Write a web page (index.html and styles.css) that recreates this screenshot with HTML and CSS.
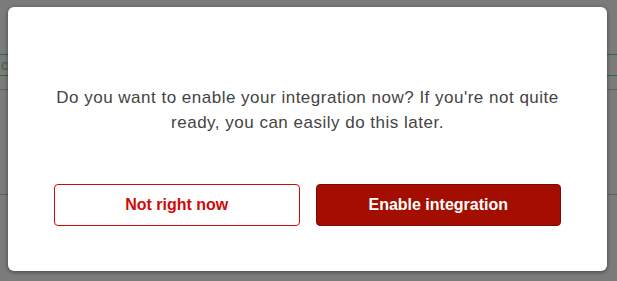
FILE: index.html
```html
<!DOCTYPE html>
<html>
<head>
<meta charset="utf-8">
<link rel="stylesheet" href="styles.css">
</head>
<body>
<div class="page">
  <div class="bg-row bg-green"><span class="bg-text">c</span></div>
  <div class="bg-line bg-line-1"></div>
  <div class="bg-line bg-line-2"></div>
</div>
<div class="modal">
  <p class="message">Do you want to enable your integration now? If you're not quite ready, you can easily do this later.</p>
  <div class="actions">
    <button class="btn btn-secondary">Not right now</button>
    <button class="btn btn-primary">Enable integration</button>
  </div>
</div>
</body>
</html>
```
FILE: styles.css
```css
html, body {
  margin: 0;
  padding: 0;
}
body {
  width: 617px;
  height: 281px;
  background: #7b7b7b;
  font-family: "Liberation Sans", Arial, sans-serif;
  position: relative;
  overflow: hidden;
}
.page {
  display: flex;
  flex-direction: column;
  padding-top: 54px;
}
.bg-row {
  height: 20px;
  border-top: 1px solid #2f6b3f;
  border-bottom: 1px solid #2f6b3f;
  display: flex;
  align-items: center;
}
.bg-text {
  color: #2f6b3f;
  font-size: 14px;
  padding-left: 1px;
}
.bg-line {
  height: 1px;
  background: #5f5f5f;
}
.bg-line-1 { margin-top: 13px; }
.bg-line-2 { margin-top: 104px; }
.modal {
  position: absolute;
  left: 8px;
  top: 7px;
  width: 599px;
  height: 264px;
  box-sizing: border-box;
  background: #fff;
  border-radius: 6px;
  box-shadow: 0 1px 4px rgba(0,0,0,0.45);
  padding: 78px 46px 0;
}
.message {
  margin: 0;
  font-size: 17px;
  line-height: 25px;
  letter-spacing: 0.5px;
  color: #444;
  text-align: center;
}
.actions {
  display: flex;
  gap: 16px;
  margin-top: 49px;
}
.btn {
  flex: 1;
  height: 42px;
  border-radius: 4px;
  font-family: "Liberation Sans", Arial, sans-serif;
  font-size: 16px;
  font-weight: bold;
  cursor: pointer;
}
.btn-secondary {
  background: #fff;
  border: 1px solid #d20a0a;
  color: #d00a0a;
}
.btn-primary {
  background: #a30e00;
  border: 1px solid #7d0a00;
  color: #fff;
}
```
